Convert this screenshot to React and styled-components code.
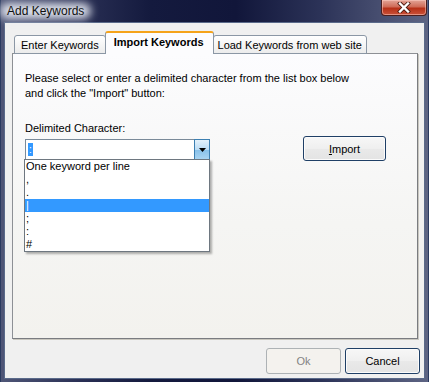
import React from 'react'
import styled, { createGlobalStyle } from 'styled-components'

const Global = createGlobalStyle`
  html, body { margin: 0; padding: 0; background: #1b2244; }
  body { font-family: "Liberation Sans", Arial, sans-serif; font-size: 11px; }
`

const options = ['One keyword per line', ',', '.', '|', ';', ':', '#']

function App() {
  return (
    <>
      <Global />
      <Window>
        <TitleBar>
          <Title><span>Add Keywords</span></Title>
          <CloseButton>
            <svg width="14" height="11" viewBox="0 0 14 11">
              <path d="M3 1.5 L11 9.5 M11 1.5 L3 9.5" stroke="#4a1a10" strokeWidth="4" strokeLinecap="square" />
              <path d="M3 1.5 L11 9.5 M11 1.5 L3 9.5" stroke="#fff" strokeWidth="2.4" strokeLinecap="square" />
            </svg>
          </CloseButton>
        </TitleBar>
        <Client>
          <TabRow>
            <Tab pad="6px">Enter Keywords</Tab>
            <Tab active>Import Keywords</Tab>
            <Tab pad="4px">Load Keywords from web site</Tab>
          </TabRow>
          <Panel>
            <Intro>
              Please select or enter a delimited character from the list box below<br />
              and click the "Import" button:
            </Intro>
            <FormRow>
              <Field>
                <Label>Delimited Character:</Label>
                <Combo>
                  <ComboText><Selected>:</Selected></ComboText>
                  <ArrowButton>
                    <svg width="7" height="4" viewBox="0 0 7 4"><path d="M0 0 H7 L3.5 4 Z" fill="#000" /></svg>
                  </ArrowButton>
                  <DropList>
                    {options.map((o) => (
                      <Option key={o} selected={o === '|'}>{o}</Option>
                    ))}
                  </DropList>
                </Combo>
              </Field>
              <ImportButton focused>
                <u>I</u>mport
              </ImportButton>
            </FormRow>
          </Panel>
          <Footer>
            <Button disabled>Ok</Button>
            <Button focused>Cancel</Button>
          </Footer>
        </Client>
      </Window>
    </>
  )
}

export default App

const Window = styled.div`
  width: 429px;
  height: 382px;
  box-sizing: border-box;
  display: flex;
  flex-direction: column;
  padding: 0 3px 3px 3px;
  background: linear-gradient(90deg, #4f5677 0%, #2a3055 18%, #141a3e 35%, #11163a 55%, #2c3358 75%, #5d6483 100%);
  border-left: 1px solid #2a3a60;
  border-right: 1px solid #2a3a60;
`

const TitleBar = styled.div`
  height: 22px;
  display: flex;
  justify-content: space-between;
  align-items: flex-start;
  flex-shrink: 0;
`

const Title = styled.div`
  position: relative;
  font-size: 12px;
  color: #101010;
  margin-top: 4px;
  padding: 0 3px;
  &::before {
    content: '';
    position: absolute;
    inset: -1px -4px -1px -4px;
    background: rgba(232, 236, 244, 0.92);
    filter: blur(4px);
    border-radius: 8px;
  }
  span { position: relative; }
`

const CloseButton = styled.div`
  width: 46px;
  height: 16px;
  margin-right: -2px;
  box-sizing: border-box;
  border: 1px solid #4a1e1e;
  border-top: none;
  border-radius: 0 0 4px 4px;
  background: linear-gradient(#e3a597 0%, #cf6b57 45%, #b73017 55%, #c9523a 100%);
  box-shadow: inset 0 0 0 1px rgba(255,210,200,0.5);
  display: flex;
  align-items: center;
  justify-content: center;
`

const Client = styled.div`
  flex: 1;
  background: #f0f0f0;
  border: 1px solid #5a6a8a;
  display: flex;
  flex-direction: column;
  padding: 8px 4px 0 7px;
`

const TabRow = styled.div`
  display: flex;
  align-items: flex-end;
  height: 23px;
  padding-left: 2px;
  position: relative;
  z-index: 1;
  margin-bottom: -1px;
`

const Tab = styled.div`
  box-sizing: border-box;
  height: ${(p) => (p.active ? '23px' : '19px')};
  padding: ${(p) => (p.active ? '3px 9px 0 8px' : `3px ${p.pad} 0 ${p.pad}`)};
  margin: ${(p) => (p.active ? '0 -1px' : '0')};
  font-weight: ${(p) => (p.active ? 'bold' : 'normal')};
  color: #000;
  border: 1px solid #8b97a5;
  border-bottom: ${(p) => (p.active ? 'none' : '1px solid #8b97a5')};
  border-top: ${(p) => (p.active ? '2px solid #f5a31a' : '1px solid #8b97a5')};
  border-radius: 3px 3px 0 0;
  background: ${(p) => (p.active ? '#fcfcfe' : 'linear-gradient(#ffffff, #ececec)')};
  position: relative;
  z-index: ${(p) => (p.active ? 2 : 1)};
  white-space: nowrap;
`

const Panel = styled.div`
  height: 286px;
  box-sizing: border-box;
  background: linear-gradient(#fcfcfe 0%, #f5f5f3 60%, #f3f2ee 100%);
  border: 1px solid #8d9095;
  border-right-color: #7a7c80;
  border-bottom-color: #7a7c80;
  box-shadow: 1px 1px 0 #c9c7bf;
  margin-right: 2px;
  padding: 17px 12px;
`

const Intro = styled.p`
  margin: 0;
  line-height: 15px;
  color: #000;
`

const FormRow = styled.div`
  display: flex;
  align-items: flex-start;
  gap: 93px;
  margin-top: 20px;
`

const Field = styled.div`
  display: flex;
  flex-direction: column;
`

const Label = styled.div`
  line-height: 14px;
  margin-bottom: 4px;
`

const Combo = styled.div`
  position: relative;
  width: 185px;
  height: 21px;
  box-sizing: border-box;
  border: 1px solid #7a8a99;
  background: #fff;
  display: flex;
`

const ComboText = styled.div`
  flex: 1;
  padding: 2px 2px;
  display: flex;
  align-items: center;
`

const Selected = styled.span`
  background: #3399ff;
  color: #fff;
  font-size: 10px;
  line-height: 13px;
  padding: 0 1px;
`

const ArrowButton = styled.div`
  width: 16px;
  box-sizing: border-box;
  border: 1px solid #3c7fb1;
  margin: -1px -1px -1px 0;
  background: linear-gradient(#e3f1fb 0%, #bcdcf4 50%, #8ac2ea 55%, #a8d4f2 100%);
  display: flex;
  align-items: center;
  justify-content: center;
`

const DropList = styled.div`
  position: absolute;
  top: 19px;
  left: -2px;
  width: 186px;
  box-sizing: border-box;
  background: #fff;
  border: 1px solid #6e7780;
  box-shadow: 2px 2px 2px rgba(0,0,0,0.3);
  z-index: 5;
`

const Option = styled.div`
  height: 13px;
  line-height: 13px;
  padding-left: 1px;
  background: ${(p) => (p.selected ? '#3399ff' : 'transparent')};
  color: ${(p) => (p.selected ? '#fff' : '#000')};
`

const Button = styled.div`
  width: 75px;
  height: 26px;
  box-sizing: border-box;
  border-radius: 3px;
  border: 1px solid ${(p) => (p.disabled ? '#adb2b5' : p.focused ? '#1f3f66' : '#707070')};
  background: ${(p) => (p.disabled ? '#f4f2ee' : 'linear-gradient(#f7f7f7 0%, #efefef 50%, #e9e9e9 51%, #e4e4e4 100%)')};
  box-shadow: ${(p) => (p.disabled ? 'none' : 'inset 0 0 0 1px #fbfbfb')};
  color: ${(p) => (p.disabled ? '#838383' : '#000')};
  display: flex;
  align-items: center;
  justify-content: center;
  u { text-decoration: underline; }
`

const ImportButton = styled(Button)`
  width: 83px;
  height: 25px;
  margin-top: 15px;
`

const Footer = styled.div`
  display: flex;
  justify-content: flex-end;
  gap: 4px;
  margin-top: 9px;
`
